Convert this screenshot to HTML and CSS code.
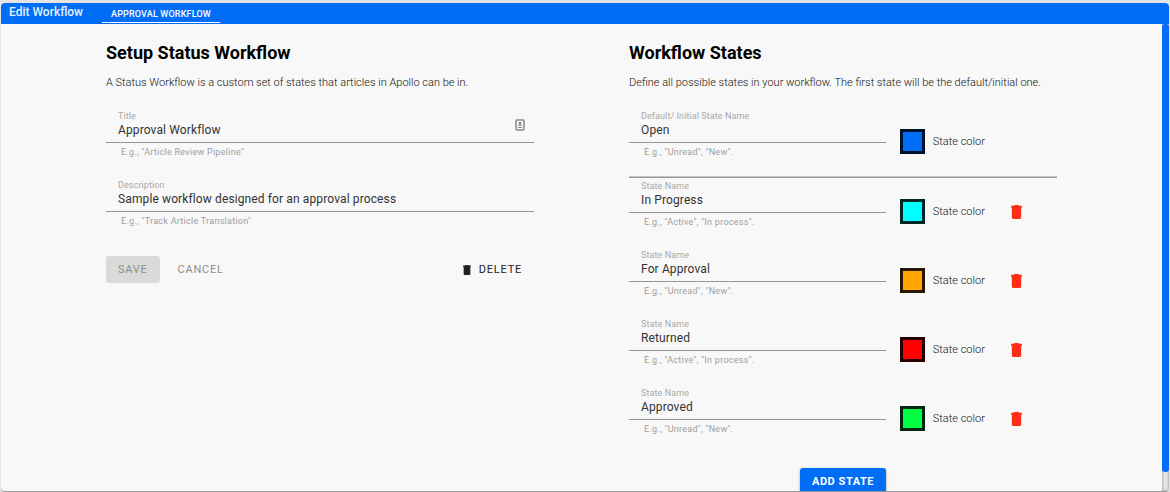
FILE: index.html
```html
<!DOCTYPE html>
<html lang="en">
<head>
<meta charset="utf-8">
<title>Edit Workflow</title>
<link rel="stylesheet" href="styles.css">
</head>
<body>
<svg class="sprite" aria-hidden="true">
  <symbol id="trash" viewBox="0 0 14 18"><path d="M1 16c0 1.100.9 2 2 2h8c1.100 0 2-.9 2-2V3H1v13zM14 1h-3.500l-1-1h-5l-1 1H0v2.500h14V1z"/></symbol>
</svg>
<div class="window">
  <header class="bar">
    <span class="bar-title">Edit Workflow</span>
    <a class="tab" href="#approval">APPROVAL WORKFLOW</a>
  </header>
  <div class="body">
    <main class="content" id="approval">
      <section class="column">
        <h2>Setup Status Workflow</h2>
        <p class="intro">A Status Workflow is a custom set of states that articles in Apollo can be in.</p>
        <div class="field">
          <div class="box">
            <label for="title">Title</label>
            <input id="title" type="text" value="Approval Workflow">
            <svg class="contact" viewBox="0 0 10 12" aria-hidden="true"><rect x="1" y="1" width="8" height="10" rx="1" fill="none" stroke="#888" stroke-width="1.500"/><circle cx="5" cy="4" r="1.200" fill="#777"/><path d="M3 6.800c0-2 4-2 4 0zM3 8h4v1H3z" fill="#888"/></svg>
          </div>
          <p class="hint">E.g., "Article Review Pipeline"</p>
        </div>
        <div class="field">
          <div class="box">
            <label for="description">Description</label>
            <input id="description" type="text" value="Sample workflow designed for an approval process">
          </div>
          <p class="hint">E.g., "Track Article Translation"</p>
        </div>
        <div class="actions">
          <button class="btn save" type="button" disabled>SAVE</button>
          <button class="btn cancel" type="button">CANCEL</button>
          <button class="btn delete" type="button"><svg class="icon-small"><use href="#trash"/></svg>DELETE</button>
        </div>
      </section>
      <section class="column">
        <h2>Workflow States</h2>
        <p class="intro">Define all possible states in your workflow. The first state will be the default/initial one.</p>
        <div class="state">
          <div class="field">
            <div class="box"><label for="s1">Default/ Initial State Name</label><input id="s1" type="text" value="Open"></div>
            <p class="hint">E.g., "Unread", "New".</p>
          </div>
          <div class="color"><button class="swatch blue" id="c1" type="button" aria-label="Pick color"></button><label for="c1">State color</label></div>
        </div>
        <hr>
        <div class="state">
          <div class="field">
            <div class="box"><label for="s2">State Name</label><input id="s2" type="text" value="In Progress"></div>
            <p class="hint">E.g., "Active", "In process".</p>
          </div>
          <div class="color"><button class="swatch cyan" id="c2" type="button" aria-label="Pick color"></button><label for="c2">State color</label></div>
          <button class="remove" type="button" aria-label="Remove state"><svg><use href="#trash"/></svg></button>
        </div>
        <div class="state">
          <div class="field">
            <div class="box"><label for="s3">State Name</label><input id="s3" type="text" value="For Approval"></div>
            <p class="hint">E.g., "Unread", "New".</p>
          </div>
          <div class="color"><button class="swatch orange" id="c3" type="button" aria-label="Pick color"></button><label for="c3">State color</label></div>
          <button class="remove" type="button" aria-label="Remove state"><svg><use href="#trash"/></svg></button>
        </div>
        <div class="state">
          <div class="field">
            <div class="box"><label for="s4">State Name</label><input id="s4" type="text" value="Returned"></div>
            <p class="hint">E.g., "Active", "In process".</p>
          </div>
          <div class="color"><button class="swatch red" id="c4" type="button" aria-label="Pick color"></button><label for="c4">State color</label></div>
          <button class="remove" type="button" aria-label="Remove state"><svg><use href="#trash"/></svg></button>
        </div>
        <div class="state">
          <div class="field">
            <div class="box"><label for="s5">State Name</label><input id="s5" type="text" value="Approved"></div>
            <p class="hint">E.g., "Unread", "New".</p>
          </div>
          <div class="color"><button class="swatch green" id="c5" type="button" aria-label="Pick color"></button><label for="c5">State color</label></div>
          <button class="remove" type="button" aria-label="Remove state"><svg><use href="#trash"/></svg></button>
        </div>
        <button class="btn add" type="button">ADD STATE</button>
      </section>
    </main>
    <div class="scroll-track"><div class="scroll-thumb"></div></div>
  </div>
</div>
</body>
</html>
```

FILE: styles.css
```css
* { box-sizing: border-box; }

body {
  margin: 0;
  height: 100vh;
  padding: 3px 1px 0;
  background: #e4e4e4;
  color: #111;
  font-family: Roboto, "Liberation Sans", sans-serif;
  font-size: 11px;
  font-weight: 300;
  overflow: hidden;
}

h2, p { margin: 0; }
button, input { font-family: inherit; }
.sprite { display: none; }

.window {
  display: flex;
  flex-direction: column;
  height: 100%;
  border-bottom: 1px solid #999;
  border-radius: 4px;
  background: #f8f8f8;
  overflow: hidden;
}

.bar {
  display: flex;
  align-items: flex-start;
  flex: none;
  height: 21px;
  padding-left: 8px;
  background: #006df7;
  color: #fff;
}

.bar-title { font-size: 12px; line-height: 18px; font-weight: 500; opacity: .9; }

.tab {
  margin-left: 19px;
  padding: 4px 9px 0;
  border-bottom: 1px solid #fff;
  color: #fff;
  font-size: 9px;
  line-height: 15px;
  font-weight: 500;
  letter-spacing: .02em;
  text-decoration: none;
}

.body { display: flex; flex: 1; min-height: 0; }

.content {
  display: grid;
  grid-template-columns: 1fr 1fr;
  gap: 95px;
  flex: 1;
  padding: 17px 105px 0;
  overflow: hidden;
}

.column { min-width: 0; }

h2 { color: #000; font-size: 18px; line-height: 24px; font-weight: 700; }

.intro { margin-top: 10px; line-height: 16px; white-space: nowrap; }

.intro + * { margin-top: 15px; }

.field { height: 69px; font-weight: 400; }

.box {
  position: relative;
  height: 37px;
  padding: 4px 12px 0;
  border-bottom: 1px solid #969696;
}

.box label {
  display: block;
  color: #a8a8a8;
  font-size: 9px;
  line-height: 12px;
  letter-spacing: .01em;
}

.box input {
  display: block;
  width: 100%;
  height: 16px;
  padding: 0;
  border: 0;
  outline: 0;
  background: none;
  color: #333;
  font-size: 12px;
  letter-spacing: .01em;
}

.contact { position: absolute; top: 13px; right: 9px; width: 10px; height: 12px; }

.hint {
  padding: 3px 15px 0;
  color: #9e9e9e;
  font-size: 9px;
  line-height: 12px;
  letter-spacing: .03em;
}

.actions { display: flex; margin-top: 12px; }

.btn {
  height: 27px;
  padding: 0 12px;
  border: 0;
  border-radius: 3px;
  background: none;
  font-size: 11px;
  line-height: 27px;
  letter-spacing: .07em;
}

.save { background: #dadada; color: #8e8e8e; }
.cancel { margin-left: 6px; color: #8e8e8e; }
.delete { display: flex; align-items: center; gap: 8px; margin-left: auto; color: #212121; }
.icon-small { width: 8px; height: 10px; fill: #212121; }

.state { display: flex; }
.state .field { flex: 0 0 60%; }

.color {
  display: flex;
  gap: 8px;
  height: 25px;
  margin: 23px 0 0 14px;
  line-height: 25px;
}

.swatch { width: 25px; height: 25px; padding: 0; border: 3px solid; }
.blue { background: #006df7; border-color: #00112b; }
.cyan { background: #00ffff; border-color: #002626; }
.orange { background: #ffa500; border-color: #261900; }
.red { background: #ff0000; border-color: #260000; }
.green { background: #00ff40; border-color: #002610; }

.remove {
  width: 11px;
  height: 14px;
  margin: 29px 0 0 26px;
  padding: 0;
  border: 0;
  background: none;
}

.remove svg { display: block; width: 11px; height: 14px; fill: #ff2d17; }

hr {
  height: 2px;
  margin: 1px 0 -2px;
  border: 0;
  border-top: 1px solid #c4c4c4;
  background: #969696;
}

.add {
  display: block;
  margin: 16px auto 0;
  background: #006df7;
  color: #fff;
  font-weight: 700;
  letter-spacing: .05em;
  box-shadow: 0 1px 3px #00000055;
}

.scroll-track { width: 7px; background: #e4e4e4; box-shadow: inset 0 0 3px #00000066; }
.scroll-thumb { height: 96%; border-radius: 3px; background: #006df7; }
```
